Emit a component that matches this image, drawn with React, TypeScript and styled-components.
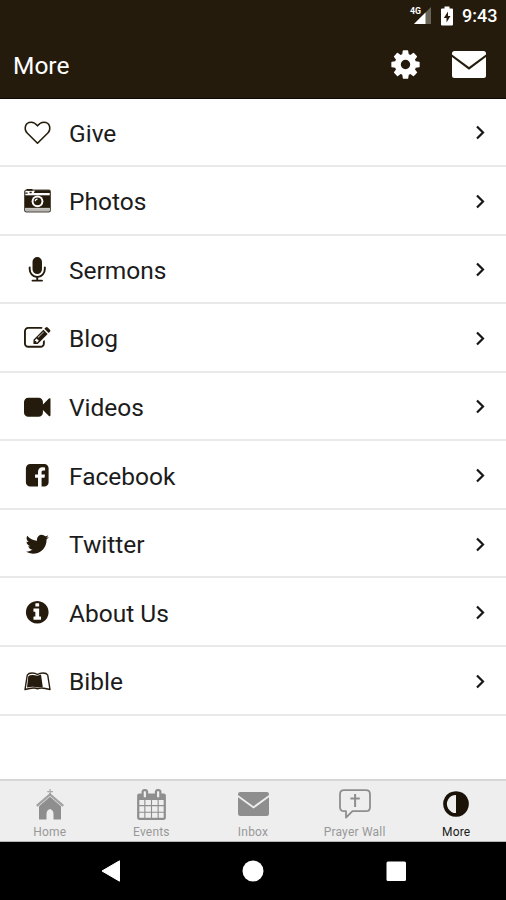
import React from 'react';
import styled, { createGlobalStyle } from 'styled-components';

const INK = '#251b0c';

const GlobalStyle = createGlobalStyle`
  * { box-sizing: border-box; }
  body { margin: 0; background: #fff; font-family: Roboto, "Liberation Sans", sans-serif; }
`;

const Screen = styled.div`
  display: flex;
  flex-direction: column;
  width: 506px;
  height: 900px;
  overflow: hidden;
  background: #fff;
`;

const Header = styled.header`
  height: 98.5px;
  background: ${INK};
  color: #fff;
  border-bottom: 1px solid #0d0903;
`;

const StatusBar = styled.div`
  display: flex;
  justify-content: flex-end;
  align-items: center;
  height: 32px;
  padding-right: 9px;
`;

const SignalIcon = styled.svg`
  width: 24px;
  height: 20px;
  margin-right: 8px;
`;

const BatteryIcon = styled.svg`
  width: 14px;
  height: 20px;
  margin-right: 8px;
`;

const Clock = styled.span`
  font-size: 18px;
  font-weight: 500;
  line-height: 32px;
  width: 35px;
  white-space: nowrap;
`;

const TitleBar = styled.div`
  display: flex;
  align-items: center;
  height: 66px;
  padding: 0 20px 0 13px;
`;

const Title = styled.h1`
  flex: 1;
  margin: 2px 0 0;
  font-size: 24.5px;
  font-weight: 400;
  line-height: 32px;
`;

const HeaderAction = styled.button<{ $gap?: number }>`
  display: flex;
  padding: 0;
  margin: 0 0 1px ${(p) => p.$gap ?? 0}px;
  border: 0;
  background: none;
  color: #fff;
`;

const Glyph = styled.svg<{ $w: number; $h?: number }>`
  display: block;
  width: ${(p) => p.$w}px;
  height: ${(p) => p.$h ?? p.$w}px;
  fill: currentColor;
  overflow: visible;
`;

const Menu = styled.ul`
  display: grid;
  grid-template-rows: repeat(9, 1fr);
  height: 617px;
  margin: 0;
  padding: 0;
  list-style: none;
`;

const MenuRow = styled.li`
  display: flex;
  align-items: center;
  padding: 2px 20px 0 24px;
  border-bottom: 2px solid #e9e9e9;
  color: ${INK};
`;

const IconSlot = styled.span`
  display: flex;
  justify-content: center;
  width: 27px;
  margin-right: 18px;
`;

const Label = styled.span`
  flex: 1;
  margin-top: 2px;
  color: #1c1c1c;
  font-size: 24.5px;
  line-height: 32px;
  font-weight: 400;
`;

const TabBar = styled.nav`
  display: grid;
  grid-template-columns: repeat(5, 101.6px);
  justify-content: center;
  height: 63px;
  margin-top: auto;
  background: #eee;
  border-top: 2px solid #d6d6d6;
  border-bottom: 1px solid #b5b5b5;
`;

const Tab = styled.a<{ $active?: boolean }>`
  display: flex;
  flex-direction: column;
  align-items: center;
  color: ${(p) => (p.$active ? '#1a1206' : '#8e8e8e')};
`;

const TabIcon = styled.span`
  display: flex;
  align-items: center;
  justify-content: center;
  height: 34px;
  margin-top: 6px;
`;

const TabLabel = styled.span<{ $active?: boolean }>`
  color: ${(p) => (p.$active ? '#1a1a1a' : '#989898')};
  font-size: 12px;
  line-height: 16px;
  letter-spacing: 0.2px;
  margin-top: 3px;
  white-space: nowrap;
`;

const SystemNav = styled.div`
  display: flex;
  justify-content: space-between;
  align-items: center;
  height: 58px;
  padding: 0 99px 0 101px;
  background: #000;
`;

const paths = {
  cog: 'M1152 896q0-106-75-181t-181-75-181 75-75 181 75 181 181 75 181-75 75-181zm512-109v222q0 12-8 23t-20 13l-185 28q-19 54-39 91 35 50 107 138 10 12 10 25t-9 23q-27 37-99 108t-94 71q-12 0-26-9l-138-108q-44 23-91 38-16 136-29 186-7 28-36 28h-222q-14 0-24.5-8.5t-11.5-21.5l-28-184q-49-16-90-37l-141 107q-10 9-25 9-14 0-25-11-126-114-165-168-7-10-7-23 0-12 8-23 15-21 51-66.5t54-70.5q-27-50-41-99l-183-27q-13-2-21-12.5t-8-23.5v-222q0-12 8-23t19-13l186-28q14-46 39-92-40-57-107-138-10-12-10-24 0-10 9-23 26-36 98.5-107.5t94.5-71.5q13 0 26 10l138 107q44-23 91-38 16-136 29-186 7-28 36-28h222q14 0 24.5 8.5t11.5 21.5l28 184q49 16 90 37l142-107q9-9 24-9 13 0 25 10 129 119 165 170 7 8 7 22 0 12-8 23-15 21-51 66.5t-54 70.5q26 50 41 98l183 28q13 2 21 12.5t8 23.5z',
  microphone: 'M1472 704v128q0 221-147.5 384.5t-364.5 187.5v132h256q26 0 45 19t19 45-19 45-45 19h-640q-26 0-45-19t-19-45 19-45 45-19h256v-132q-217-24-364.5-187.5t-147.5-384.5v-128q0-26 19-45t45-19 45 19 19 45v128q0 185 131.5 316.5t316.5 131.5 316.5-131.5 131.5-316.5v-128q0-26 19-45t45-19 45 19 19 45zm-256-384v512q0 132-94 226t-226 94-226-94-94-226v-512q0-132 94-226t226-94 226 94 94 226z',
  edit: 'M888 1184l116-116-152-152-116 116v56h96v96h56zm440-720q-16-16-33 1l-350 350q-17 17-1 33t33-1l350-350q17-17 1-33zm80 594v190q0 119-84.5 203.5t-203.5 84.5h-832q-119 0-203.5-84.5t-84.5-203.5v-832q0-119 84.5-203.5t203.5-84.5h832q63 0 117 25 15 7 18 23 3 17-9 29l-49 49q-14 14-32 8-23-6-45-6h-832q-66 0-113 47t-47 113v832q0 66 47 113t113 47h832q66 0 113-47t47-113v-126q0-13 9-22l64-64q15-15 35-7t20 29zm-96-738l288 288-672 672h-288v-288zm444 132l-92 92-288-288 92-92q28-28 68-28t68 28l152 152q28 28 28 68t-28 68z',
  video: 'M1792 352v1088q0 42-39 59-13 5-25 5-27 0-45-19l-403-403v166q0 119-84.5 203.5t-203.5 84.5h-704q-119 0-203.5-84.5t-84.5-203.5v-704q0-119 84.5-203.5t203.5-84.5h704q119 0 203.5 84.5t84.5 203.5v165l403-402q18-19 45-19 12 0 25 5 39 17 39 59z',
  facebook: 'M1376 128q119 0 203.5 84.5t84.5 203.5v960q0 119-84.5 203.5t-203.5 84.5h-188v-595h199l30-232h-229v-148q0-56 23.5-84t91.5-28l122-1v-207q-63-9-178-9-136 0-217.5 80t-81.5 226v171h-200v232h200v595h-532q-119 0-203.5-84.5t-84.5-203.5v-960q0-119 84.5-203.5t203.5-84.5h960z',
  twitter: 'M1684 408q-67 98-162 167 1 14 1 42 0 130-38 259.5t-115.5 248.5-184.5 210.5-258 146-323 54.5q-271 0-496-145 35 4 78 4 225 0 401-138-105-2-188-64.5t-114-159.5q33 5 61 5 43 0 85-11-112-23-185.5-111.5t-73.5-205.5v-4q68 38 146 41-66-44-105-115t-39-154q0-88 44-163 121 149 294.5 238.5t371.5 99.5q-8-38-8-74 0-134 94.5-228.5t228.5-94.5q140 0 236 102 109-21 205-78-37 115-142 178 93-10 186-50z',
  info: 'M1152 1376v-160q0-14-9-23t-23-9h-96v-512q0-14-9-23t-23-9h-320q-14 0-23 9t-9 23v160q0 14 9 23t23 9h96v320h-96q-14 0-23 9t-9 23v160q0 14 9 23t23 9h448q14 0 23-9t9-23zm-128-896v-160q0-14-9-23t-23-9h-192q-14 0-23 9t-9 23v160q0 14 9 23t23 9h192q14 0 23-9t9-23zm640 416q0 209-103 385.5t-279.5 279.5-385.5 103-385.5-103-279.5-279.5-103-385.5 103-385.5 279.5-279.5 385.5-103 385.5 103 279.5 279.5 103 385.5z',
  adjust: 'M896 1440v-1088q-148 0-273 73t-198 198-73 273 73 273 198 198 273 73zm768-544q0 209-103 385.5t-279.5 279.5-385.5 103-385.5-103-279.5-279.5-103-385.5 103-385.5 279.5-279.5 385.5-103 385.5 103 279.5 279.5 103 385.5z',
  calendar: 'M192 1664h288v-288h-288v288zm352 0h320v-288h-320v288zm-352-352h288v-320h-288v320zm352 0h320v-320h-320v320zm-352-384h288v-288h-288v288zm736 736h320v-288h-320v288zm-384-736h320v-288h-320v288zm768 736h288v-288h-288v288zm-384-352h320v-320h-320v320zm-352-864v-288q0-13-9.5-22.5t-22.5-9.5h-64q-13 0-22.5 9.5t-9.5 22.5v288q0 13 9.5 22.5t22.5 9.5h64q13 0 22.5-9.5t9.5-22.5zm736 864h288v-320h-288v320zm-384-384h320v-288h-320v288zm384 0h288v-288h-288v288zm32-480v-288q0-13-9.5-22.5t-22.5-9.5h-64q-13 0-22.5 9.5t-9.5 22.5v288q0 13 9.5 22.5t22.5 9.5h64q13 0 22.5-9.5t9.5-22.5zm384-64v1280q0 52-38 90t-90 38h-1408q-52 0-90-38t-38-90v-1280q0-52 38-90t90-38h128v-96q0-66 47-113t113-47h64q66 0 113 47t47 113v96h384v-96q0-66 47-113t113-47h64q66 0 113 47t47 113v96h128q52 0 90 38t38 90z',
};

const Awesome = ({ name, size = 26.5 }: { name: keyof typeof paths; size?: number }) => (
  <Glyph $w={size} viewBox="0 0 1792 1792">
    <path d={paths[name]} />
  </Glyph>
);

const Heart = () => (
  <Glyph $w={27} $h={24} viewBox="0 0 27 24">
    <path
      d="M13.5 22.2 3.4 12.3C-.3 8.4.6 1.3 7.3 1.3c2.7 0 4.7 1.7 6.200 3.500 1.500-1.800 3.500-3.500 6.200-3.500 6.700 0 7.600 7.100 3.900 11z"
      fill="none"
      stroke="currentColor"
      strokeWidth="1.6"
      strokeLinejoin="round"
    />
  </Glyph>
);

const Camera = () => (
  <Glyph $w={27} $h={24} viewBox="0 0 27 24">
    <rect x="0.7" y="1.2" width="25.6" height="21.6" rx="1.6" fill="#fff" stroke="#4c453b" strokeWidth="1.3" />
    <path d="M2 19.2h23v3H2z" fill="#b9b7b3" />
    <path d="M1 6.300h25v12.600H1z" />
    <path d="M11.200 1.200H26V4H9.700z" />
    <path d="M2.500 0h6v1.800h-6zM1.300 3.600h2.400v1.200H1.300zM5.500 2.800h2.200v1.500H5.500z" />
    <circle cx="13.500" cy="12.300" r="5.900" fill="#fff" />
    <circle cx="13.500" cy="12.300" r="3.900" />
    <path d="M11.300 12.300a2.200 2.200 0 0 1 2.200-2.200" fill="none" stroke="#fff" strokeWidth="1.100" />
  </Glyph>
);

const Book = () => (
  <Glyph $w={27} $h={19} viewBox="0 0 27 19">
    <path
      d="M13.500 16.800Q10 14.800 1 17.500L3.300 3Q4.500 1 8 1q3.500 0 5.500 1.500Q15.500 1 19 1q3.500 0 4.700 2L26 17.500q-9-2.700-12.500-.7z"
      fill="#fff"
      stroke="currentColor"
      strokeWidth="1.400"
      strokeLinejoin="round"
    />
    <path d="M4.300 4.200Q7 2.200 13.500 3.800L17 2.500l1.800 12.700q-3-.6-5.300.4-3.500-1.500-10.500-.2z" />
  </Glyph>
);

const Envelope = ({ w, h }: { w: number; h: number }) => (
  <Glyph $w={w} $h={h} viewBox="0 0 34 27" preserveAspectRatio="none">
    <path d="M2.500 0h29Q34 0 34 2.500v1L17 16 0 3.500v-1Q0 0 2.500 0z" />
    <path d="M0 6 17 18.700 34 6v18.500Q34 27 31.500 27h-29Q0 27 0 24.500z" />
  </Glyph>
);

const Chevron = () => (
  <Glyph $w={11} $h={15} viewBox="0 0 11 15">
    <path d="m2 1.500 6 6-6 6" fill="none" stroke="#161616" strokeWidth="2.200" />
  </Glyph>
);

const Church = () => (
  <Glyph $w={28} $h={31} viewBox="0 0 28 31">
    <path d="M13.500 0h1.200v2H17v1.200h-2.300V6h-1.200V3.200h-2.300V2h2.300z" opacity="0.7" />
    <path d="M14 4 28 16l-1.500 1.700L14 7 1.500 17.700 0 16z" opacity="0.8" />
    <path d="M14 7.700 25 17.200v13.300h-7.500V25q0-4-3.500-5-3.500 1-3.500 5v5.500H3V17.200z" />
  </Glyph>
);

const Prayer = () => (
  <Glyph $w={32} $h={30} viewBox="0 0 32 30">
    <path
      d="M5 1.200h22q4 0 4 4v13q0 4-4 4H13.500L7 28.500v-6.300H5q-4 0-4-4v-13q0-4 4-4z"
      fill="none"
      stroke="currentColor"
      strokeWidth="1.800"
      strokeLinejoin="round"
    />
    <path d="M15.100 5h2v3.500h3.700v2h-3.700V18h-2v-7.500h-3.700v-2h3.700z" />
  </Glyph>
);

const menuItems = [
  { label: 'Give', icon: <Heart /> },
  { label: 'Photos', icon: <Camera /> },
  { label: 'Sermons', icon: <Awesome name="microphone" /> },
  { label: 'Blog', icon: <Awesome name="edit" /> },
  { label: 'Videos', icon: <Awesome name="video" /> },
  { label: 'Facebook', icon: <Awesome name="facebook" /> },
  { label: 'Twitter', icon: <Awesome name="twitter" /> },
  { label: 'About Us', icon: <Awesome name="info" /> },
  { label: 'Bible', icon: <Book /> },
];

const tabs = [
  { label: 'Home', icon: <Church /> },
  { label: 'Events', icon: <Awesome name="calendar" size={31} /> },
  { label: 'Inbox', icon: <Envelope w={31} h={24} /> },
  { label: 'Prayer Wall', icon: <Prayer /> },
  { label: 'More', icon: <Awesome name="adjust" size={30} />, active: true },
];

export default function App() {
  return (
    <Screen>
      <GlobalStyle />
      <Header>
        <StatusBar>
          <SignalIcon viewBox="0 0 24 20">
            <path d="M23 1v17H6z" fill="#6b6459" />
            <path d="M17.500 6.500V18H6z" fill="#fff" />
            <text x="2" y="8" fontSize="9" fontWeight="700" fill="#fff" textLength="11" lengthAdjust="spacingAndGlyphs">4G</text>
          </SignalIcon>
          <BatteryIcon viewBox="0 0 14 20">
            <path d="M4.500 0.500h5v2H12q1 0 1 1v15q0 1-1 1H2q-1 0-1-1v-15q0-1 1-1h2.500z" fill="#fff" />
            <path d="M8 5.500 3.800 12h2.700v4.500L10.500 10H8z" fill={INK} />
          </BatteryIcon>
          <Clock>9:43</Clock>
        </StatusBar>
        <TitleBar>
          <Title>More</Title>
          <HeaderAction aria-label="Settings">
            <Awesome name="cog" size={33} />
          </HeaderAction>
          <HeaderAction aria-label="Messages" $gap={30}>
            <Envelope w={34} h={27} />
          </HeaderAction>
        </TitleBar>
      </Header>
      <Menu>
        {menuItems.map((item) => (
          <MenuRow key={item.label}>
            <IconSlot>{item.icon}</IconSlot>
            <Label>{item.label}</Label>
            <Chevron />
          </MenuRow>
        ))}
      </Menu>
      <TabBar>
        {tabs.map((tab) => (
          <Tab key={tab.label} $active={tab.active}>
            <TabIcon>{tab.icon}</TabIcon>
            <TabLabel $active={tab.active}>{tab.label}</TabLabel>
          </Tab>
        ))}
      </TabBar>
      <SystemNav>
        <Glyph $w={20} $h={22} viewBox="0 0 20 22">
          <path d="M18.500.8v20.400L1 11z" fill="#fff" stroke="#fff" strokeLinejoin="round" />
        </Glyph>
        <Glyph $w={22} viewBox="0 0 22 22">
          <circle cx="11" cy="11" r="10.500" fill="#fff" />
        </Glyph>
        <Glyph $w={22} viewBox="0 0 22 22">
          <rect x="1.500" y="1.500" width="19.500" height="19.500" rx="1.500" fill="#fff" />
        </Glyph>
      </SystemNav>
    </Screen>
  );
}
